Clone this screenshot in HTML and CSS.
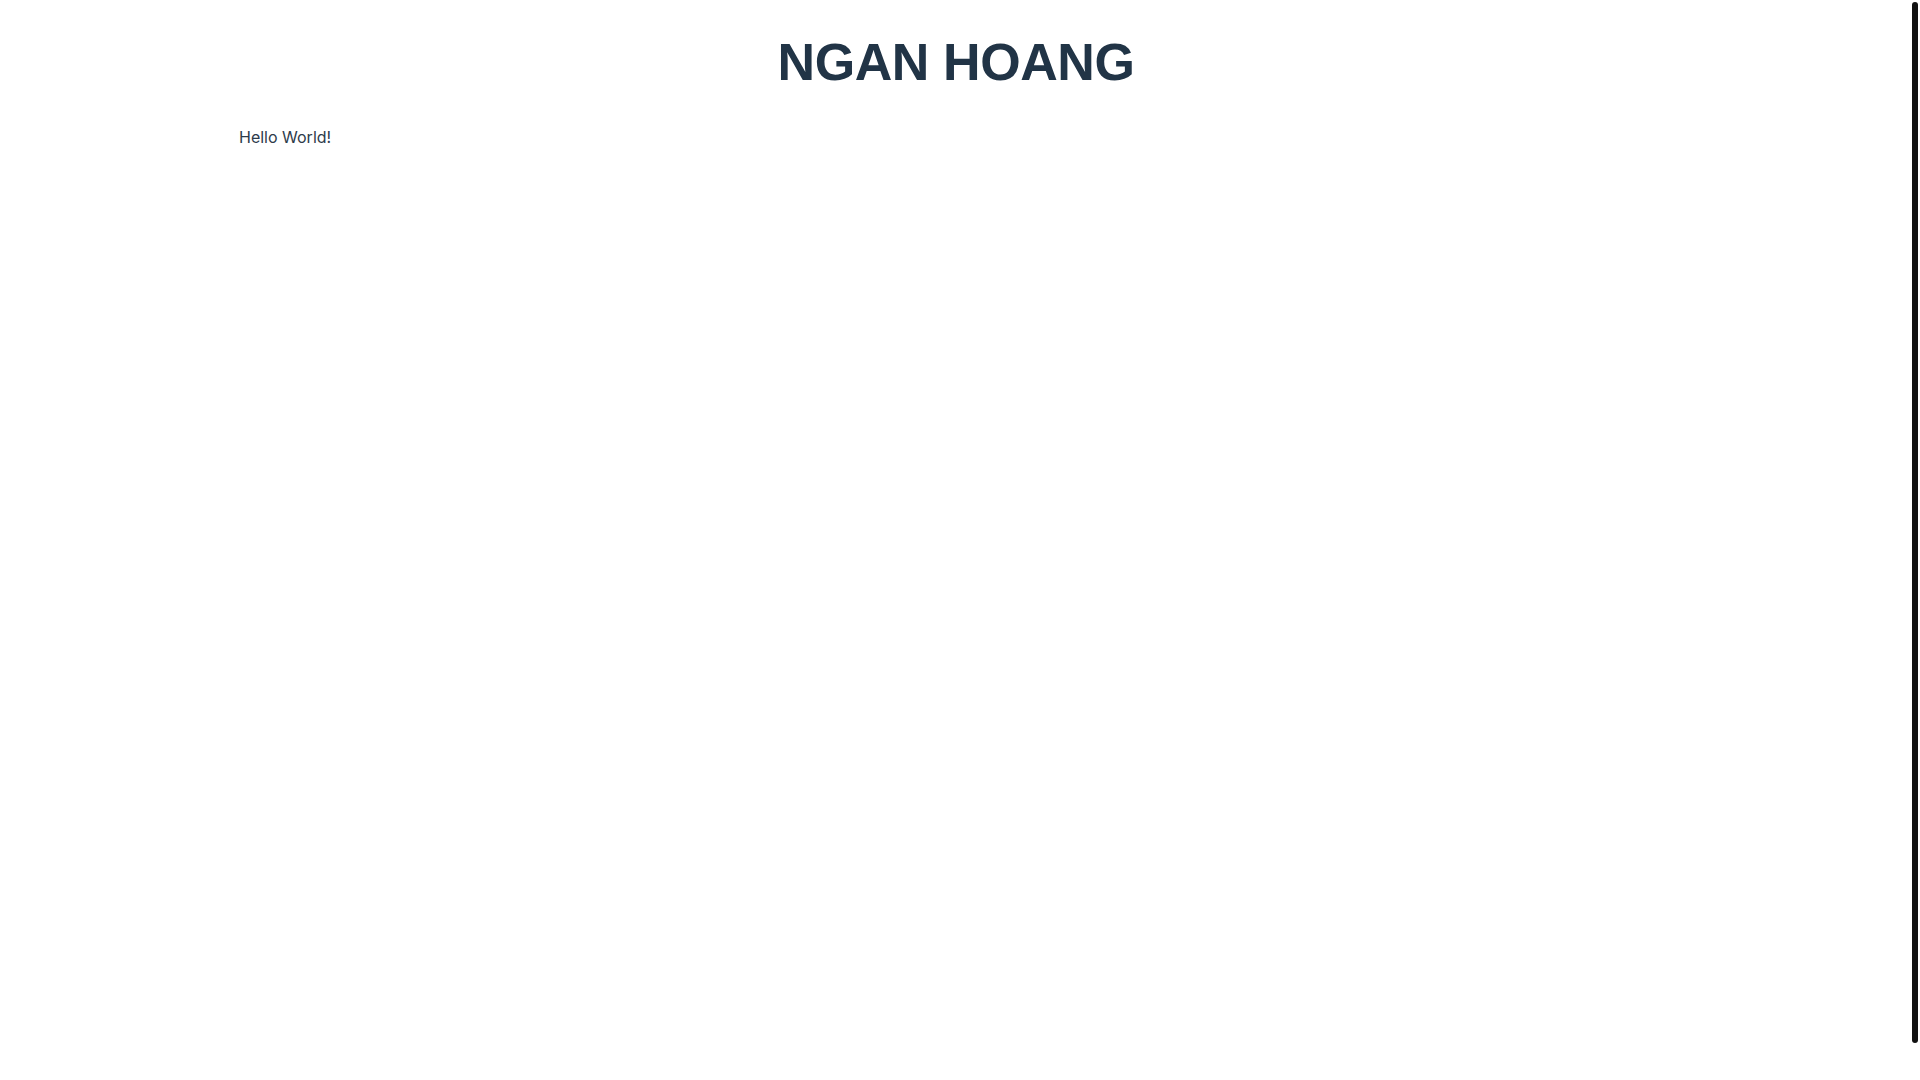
FILE: index.html
```html
<!DOCTYPE html>
<html lang="en">
<head>
<meta charset="utf-8">
<title>Ngan Hoang</title>
<link rel="stylesheet" href="styles.css">
</head>
<body>
<header class="site-header">
  <h1 class="site-title">NGAN HOANG</h1>
</header>
<main class="content">
  <p class="greeting">Hello World!</p>
</main>
<div class="scroll-thumb" aria-hidden="true"></div>
</body>
</html>
```
FILE: styles.css
```css
html {
  background: #ffffff;
}
body {
  margin: 0;
  padding-right: 8px;
  font-family: "Inter", "Noto Sans", sans-serif;
  color: #2d3b4b;
  background: #ffffff;
}
.site-header {
  display: flex;
  justify-content: center;
  padding-top: 36px;
}
.site-title {
  margin: 0;
  font-family: "Liberation Sans", Arial, sans-serif;
  font-weight: 700;
  font-size: 52px;
  line-height: 1;
  letter-spacing: -0.008em;
  color: #213446;
}
.content {
  max-width: 1434px;
  margin: 0 auto;
  padding-top: 37px;
}
.greeting {
  margin: 0;
  font-size: 16px;
  line-height: 1.5;
  color: #2d3b4b;
}
.scroll-thumb {
  position: fixed;
  top: 2px;
  right: 2px;
  width: 6px;
  height: 1041px;
  background: #111111;
  border-radius: 3px;
}
```
